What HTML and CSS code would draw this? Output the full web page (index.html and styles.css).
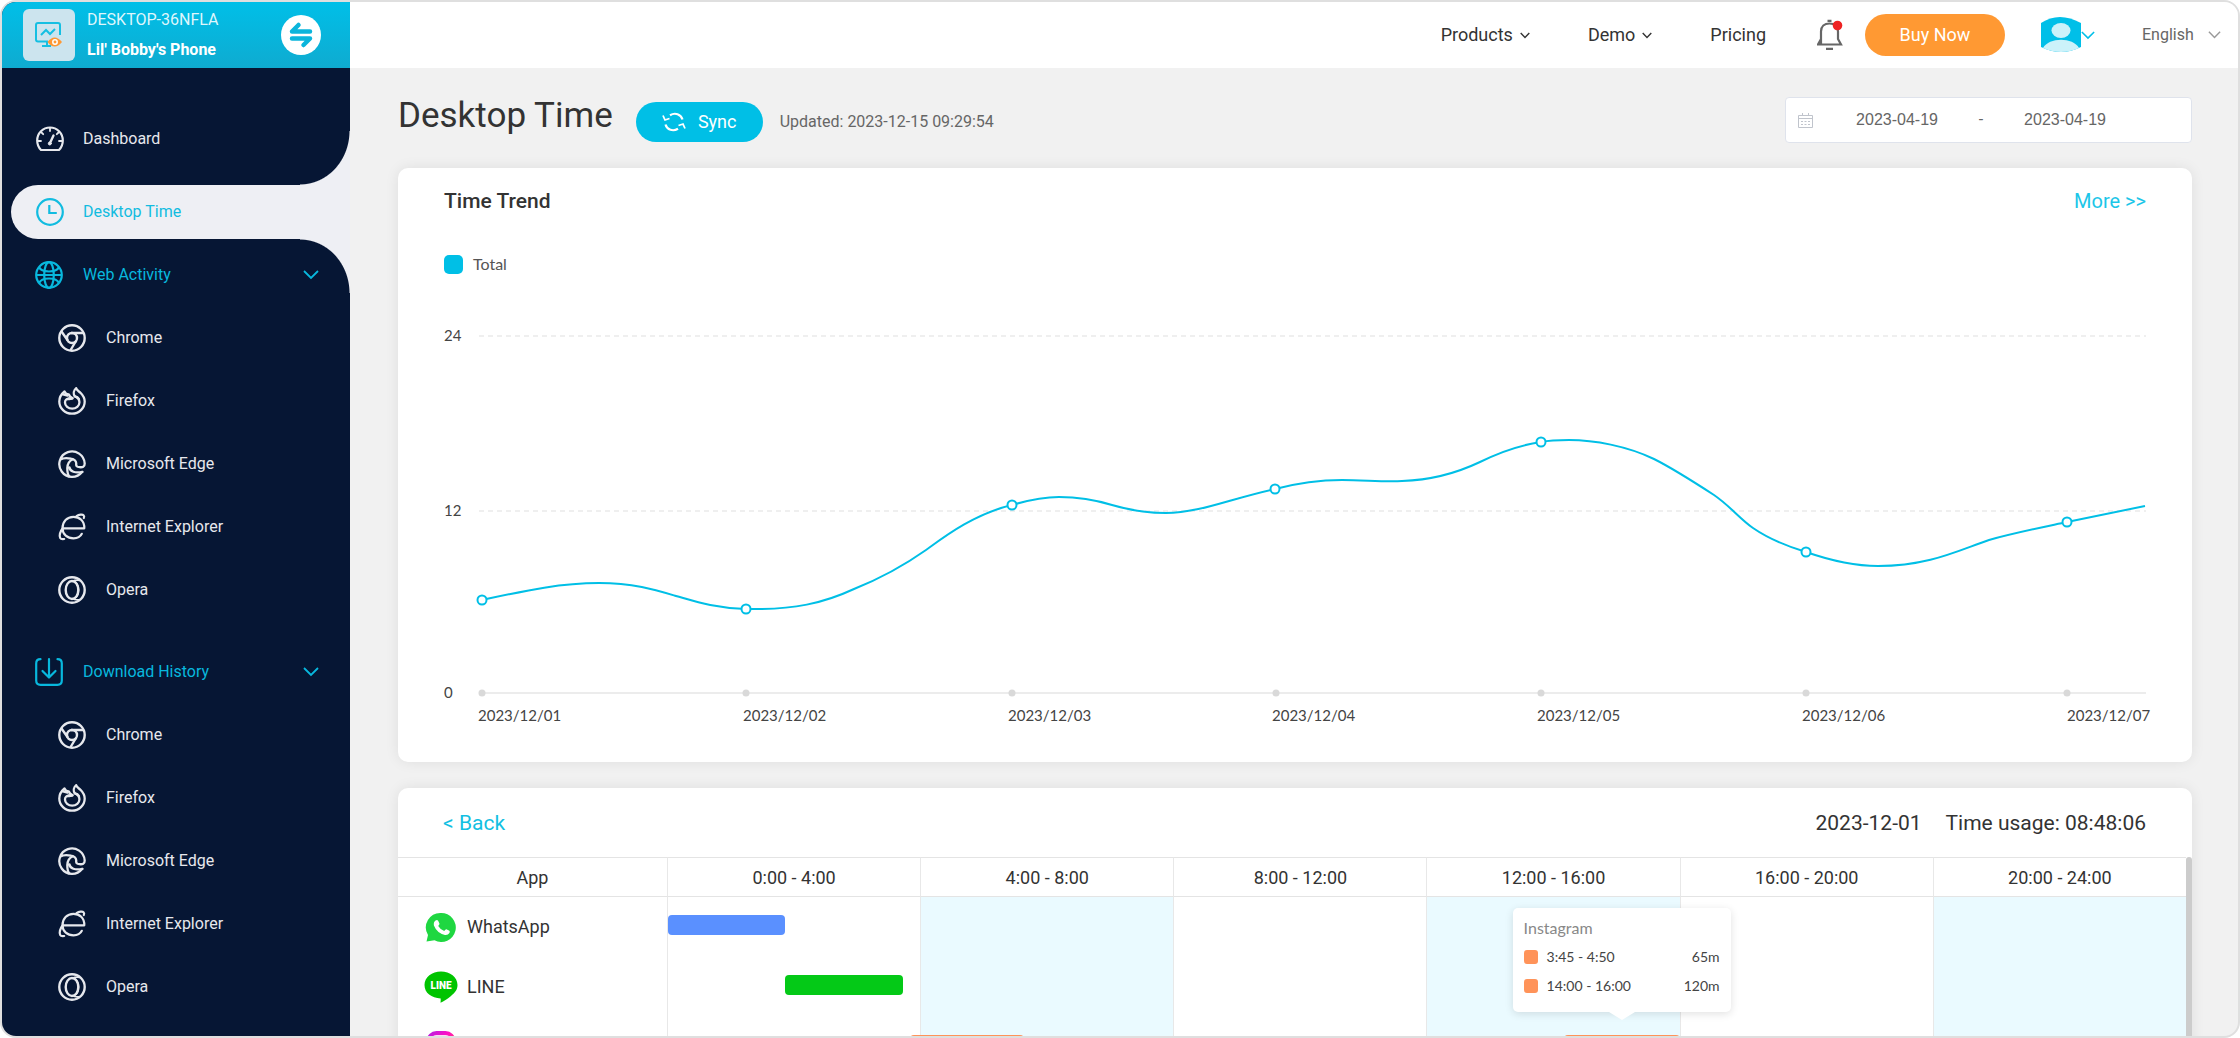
FILE: index.html
```html
<!DOCTYPE html>
<html lang="en">
<head>
<meta charset="utf-8">
<meta name="viewport" content="width=device-width, initial-scale=1">
<title>Desktop Time</title>
<link rel="stylesheet" href="styles.css">
</head>
<body>
<svg class="sprite" aria-hidden="true">
  <symbol id="i-chrome" viewBox="0 0 28 28"><g fill="none" stroke="currentColor" stroke-width="2.4"><circle cx="14" cy="14" r="12.7"/><circle cx="14" cy="14" r="5"/><path d="M13 9h13M9.8 16.500L3.500 7.500M18.300 16.500L12.300 26.500"/></g></symbol>
  <symbol id="i-firefox" viewBox="0 0 28 28"><g fill="none" stroke="currentColor" stroke-width="2.300" stroke-linejoin="round" stroke-linecap="round"><path d="M6.500 4.500C2.800 7.500 1.300 11 1.300 14.500a12.700 12.200 0 0 0 25.400 0C26.700 10 24.500 7.800 22.500 5.800C20.500 4 18.500 3 18.200 1.200C15.800 3 15.200 6.500 16.500 9C19.500 10.500 21.600 12.500 21.400 15.500a7.200 6.200 0 0 1-14.400 0C7 13 8.500 11.800 10.500 12C12 12.200 13.500 12 14.500 11C12 10.300 11.500 9.500 10.800 7.500C9 7.500 7.300 6.500 6.500 4.500z"/><path d="M17 9.500c1.500.2 3 .8 4 2.500M5 7.500l4.500 1.200M10.500 11.500h4"/></g></symbol>
  <symbol id="i-edge" viewBox="0 0 28 28"><g fill="none" stroke="currentColor" stroke-width="2.300" stroke-linecap="round" stroke-linejoin="round"><path d="M24 22A12.700 12.700 0 1 1 26.700 13.500C26.700 17 24.500 17.500 21.500 17.200C18.800 17 18 16 18.200 14C18.500 11.500 16.500 9 13 8.700C9 7.800 5 8 2.500 9.500"/><path d="M14.500 9.500C10.800 11 9.500 14.500 9.300 18C9.300 21.500 9.800 24.500 11 26M11.500 17.500C12 21.500 17 23.500 24.500 21.800"/></g></symbol>
  <symbol id="i-ie" viewBox="0 0 28 28"><g fill="none" stroke="currentColor" stroke-width="2.200" stroke-linecap="round" stroke-linejoin="round"><path d="M4.500 15.300H26.300C26.500 8 21.500 3.800 15.500 3.800C9 3.800 4.500 8.500 4.500 15.300C4.500 21.500 9.500 25.300 15.500 25.300C19.500 25.300 22.500 23.500 23.800 20.800"/><path d="M18.500 3.200C21 1.500 24.500 1.200 25.500 2.200C26.300 3 26.200 4.200 25.800 5M4.500 15.500C2 18.500 1 23 2.200 25C3 26.500 5 26.200 6.200 26"/></g></symbol>
  <symbol id="i-opera" viewBox="0 0 28 28"><g fill="none" stroke="currentColor" stroke-width="2.400"><circle cx="14" cy="14" r="12.700"/><ellipse cx="14" cy="14" rx="6.300" ry="9"/><path d="M14 5.500C17 4 20 4 22 4.500M14 22.500C17 24 20 24 22 23.500M16 5.500C22 8 22 20 16 22.500" stroke-width="1.800"/></g></symbol>
  <symbol id="i-down" viewBox="0 0 16 10"><path d="M1 1l7 7 7-7" fill="none" stroke="currentColor" stroke-width="1.800"/></symbol>
  <symbol id="i-down-sm" viewBox="0 0 10 7"><path d="M.7 1l4.300 4.500L9.300 1" fill="none" stroke="currentColor" stroke-width="1.400"/></symbol>
</svg>

<div class="window">
  <aside class="sidebar">
    <div class="device">
      <span class="device-icon">
        <svg width="28" height="26" viewBox="0 0 28 26" fill="none" stroke="#15bfe2" stroke-width="2" aria-hidden="true"><path d="M13 19.500H3a2 2 0 0 1-2-2V3a2 2 0 0 1 2-2h20a2 2 0 0 1 2 2v10M7 24h9M12 20v4M6 13l5-5 4 4 5-5"/><path d="M12.500 20q7-9 14.500 0q-7.500 9-14.500 0z" fill="#ff9833" stroke="none"/><circle cx="20" cy="20" r="2.200" stroke="#fff" stroke-width="1.500" fill="#ff9833"/></svg>
      </span>
      <div class="device-text">
        <span>DESKTOP-36NFLA</span>
        <strong>Lil' Bobby's Phone</strong>
      </div>
      <button class="switch" type="button" aria-label="Switch device">
        <svg width="24" height="28" viewBox="0 0 24 28" fill="none" stroke="#0bb5dc" stroke-width="4.500" stroke-linecap="round" stroke-linejoin="round" aria-hidden="true"><path d="M21 10.500H3L9.500 4M3 17.500h18L14.500 24"/></svg>
      </button>
    </div>
    <nav class="menu" aria-label="Monitoring">
      <a class="item top" href="#"><svg width="28" height="26" viewBox="0 0 28 26" fill="none" stroke="currentColor" stroke-width="2.200" stroke-linecap="round" aria-hidden="true"><path d="M5 24C2.500 21.500 1.200 18.500 1.200 14.500a12.800 13 0 0 1 25.600 0C26.800 18.500 25.500 21.500 23 24z" stroke-linejoin="round"/><path d="M14 2v3M5.500 6.500l1.700 1.700M22.500 6.500l-1.700 1.700M2 15h3M23 15h3" stroke-width="1.800"/><path d="M17.500 9.500L14 17" stroke-width="2.400"/><circle cx="13.800" cy="17.500" r="1.500" fill="currentColor" stroke-width="1"/></svg>Dashboard</a>
      <a class="item active" href="#" aria-current="page"><svg width="28" height="28" viewBox="0 0 28 28" fill="none" stroke="currentColor" stroke-width="2.200" aria-hidden="true"><circle cx="14" cy="14" r="12.800"/><path d="M13.300 7v8h7.500"/></svg>Desktop Time</a>
      <button class="item group first" type="button"><svg width="28" height="28" viewBox="0 0 28 28" fill="none" stroke="currentColor" stroke-width="2.200" aria-hidden="true"><circle cx="14" cy="14" r="12.800"/><ellipse cx="14" cy="14" rx="4.800" ry="12.800"/><path d="M4 6q2 4.500 10 4.500T24 6M4 22q2-4.500 10-4.500T24 22M1 14h26"/></svg>Web Activity<svg class="chev" width="16" height="10"><use href="#i-down"/></svg></button>
      <ul class="sub">
        <li><a href="#"><svg width="28" height="28"><use href="#i-chrome"/></svg>Chrome</a></li>
        <li><a href="#"><svg width="28" height="28"><use href="#i-firefox"/></svg>Firefox</a></li>
        <li><a href="#"><svg width="28" height="28"><use href="#i-edge"/></svg>Microsoft Edge</a></li>
        <li><a href="#"><svg width="28" height="28"><use href="#i-ie"/></svg>Internet Explorer</a></li>
        <li><a href="#"><svg width="28" height="28"><use href="#i-opera"/></svg>Opera</a></li>
      </ul>
      <button class="item group second" type="button"><svg width="28" height="28" viewBox="0 0 28 28" fill="none" stroke="currentColor" stroke-width="2.200" stroke-linecap="round" stroke-linejoin="round" aria-hidden="true"><path d="M5.500 1.200C2.500 1.200 1.200 2.500 1.200 5.500V22.500C1.200 25.500 2.500 26.800 5.500 26.800H22.500C25.500 26.800 26.800 25.500 26.800 22.500V5.500C26.800 2.500 25.500 1.200 22.500 1.200M14 1.200v18M7.500 13l6.500 6.500L20.500 13"/></svg>Download History<svg class="chev" width="16" height="10"><use href="#i-down"/></svg></button>
      <ul class="sub">
        <li><a href="#"><svg width="28" height="28"><use href="#i-chrome"/></svg>Chrome</a></li>
        <li><a href="#"><svg width="28" height="28"><use href="#i-firefox"/></svg>Firefox</a></li>
        <li><a href="#"><svg width="28" height="28"><use href="#i-edge"/></svg>Microsoft Edge</a></li>
        <li><a href="#"><svg width="28" height="28"><use href="#i-ie"/></svg>Internet Explorer</a></li>
        <li><a href="#"><svg width="28" height="28"><use href="#i-opera"/></svg>Opera</a></li>
      </ul>
    </nav>
  </aside>

  <div class="content">
    <header class="topbar">
      <nav class="links" aria-label="Site">
        <button class="link" type="button">Products<svg width="10" height="7"><use href="#i-down-sm"/></svg></button>
        <button class="link" type="button">Demo<svg width="10" height="7"><use href="#i-down-sm"/></svg></button>
        <a class="link" href="#">Pricing</a>
      </nav>
      <button class="bell" type="button" aria-label="Notifications"><svg width="26" height="32" viewBox="0 0 26 32" fill="none" aria-hidden="true"><path d="M4 25V12.500C4 7.500 7.500 4.500 12.500 4.500S21 7.500 21 12.500V20l3 5.500H1L4 20M10.500 1.800h4M9 29.800h7" stroke="#666" stroke-width="2.200"/><circle cx="20.500" cy="6.500" r="4.800" fill="#ee2222"/></svg></button>
      <button class="buy" type="button">Buy Now</button>
      <button class="user" type="button" aria-label="Account"><svg width="40" height="36" viewBox="0 0 40 36" aria-hidden="true"><path d="M0 6Q18 -6 40 6V30Q20 40 0 30z" fill="#00bfe8"/><ellipse cx="20" cy="13.500" rx="9.500" ry="7.500" fill="#ccf2fa"/><path d="M2 31C8 20 32 20 38 31Q20 39 2 31z" fill="#ccf2fa"/></svg><svg width="14" height="9"><use href="#i-down"/></svg></button>
      <label class="lang"><select aria-label="Language"><option>English</option></select><svg width="13" height="8"><use href="#i-down"/></svg></label>
    </header>

    <main class="main">
      <div class="page-head">
        <div class="title-row">
          <h1>Desktop Time</h1>
          <button class="sync" type="button"><svg width="24" height="20" viewBox="0 0 24 20" fill="none" stroke="#fff" stroke-width="2.200" aria-hidden="true"><path d="M8 3.200C13 .3 19 2 20.500 7.500M16 16.800C11 19.700 5 18 3.500 12.500"/><path d="M1 3.500l2 4.500 4.500-1.500M23 16.500l-2-4.500-4.500 1.500" stroke-width="1.800"/></svg>Sync</button>
          <span class="updated">Updated: 2023-12-15 09:29:54</span>
        </div>
        <div class="range">
          <svg width="15" height="15" viewBox="0 0 15 15" fill="none" stroke="#c0c4cc" aria-hidden="true"><path d="M.5 2.500h14v12H.5zM.5 5.500h14M4.500 0v3M10.500 0v3M3 8.500h2M6.500 8.500h2M10 8.500h2M3 11.500h2M6.500 11.500h2M10 11.500h2"/></svg>
          <input type="text" value="2023-04-19" aria-label="Start date">
          <span>-</span>
          <input type="text" value="2023-04-19" aria-label="End date">
        </div>
      </div>

      <section class="card trend">
        <div class="trend-head"><h2>Time Trend</h2><a href="#">More &gt;&gt;</a></div>
        <div class="legend"><i></i>Total</div>
        <svg class="chart" viewBox="0 0 1702 420" role="img" aria-label="Total hours per day">
          <g class="grid"><path d="M35 26H1702M35 201H1702" stroke-dasharray="5 4"/></g>
          <path class="axis" d="M38 383H1702"/>
          <g class="tick"><circle cx="38" cy="383" r="3.500"/><circle cx="302" cy="383" r="3.500"/><circle cx="568" cy="383" r="3.500"/><circle cx="832" cy="383" r="3.500"/><circle cx="1097" cy="383" r="3.500"/><circle cx="1362" cy="383" r="3.500"/><circle cx="1623" cy="383" r="3.500"/></g>
          <path class="line" d="M38 290C80 281 115 273 155 273C190 273 212 280 232 286C250 291 270 298 302 299C350 300 380 293 410 279C440 267 465 252 482 240C500 227 530 204 568 195C585 190 600 187 615 187C640 187 655 191 668 195C685 200 700 203 722 203C755 203 785 189 831 179C850 174 875 170 898 170C920 170 940 172 958 171C990 170 1015 162 1036 152C1050 145 1070 136 1097 132C1107 130 1115 130 1125 130C1150 130 1183 136 1210 149C1230 159 1250 172 1270 185C1286 196 1295 208 1309 218C1325 229 1342 236 1362 242C1385 250 1410 256 1434 256C1485 256 1515 240 1545 230C1570 223 1595 218 1623 212L1701 196"/>
          <g class="dot"><circle cx="38" cy="290" r="4.500"/><circle cx="302" cy="299" r="4.500"/><circle cx="568" cy="195" r="4.500"/><circle cx="831" cy="179" r="4.500"/><circle cx="1097" cy="132" r="4.500"/><circle cx="1362" cy="242" r="4.500"/><circle cx="1623" cy="212" r="4.500"/></g>
          <g class="label">
            <text x="0" y="31">24</text><text x="0" y="206">12</text><text x="0" y="388">0</text>
            <text x="34" y="411">2023/12/01</text><text x="299" y="411">2023/12/02</text><text x="564" y="411">2023/12/03</text><text x="828" y="411">2023/12/04</text><text x="1093" y="411">2023/12/05</text><text x="1358" y="411">2023/12/06</text><text x="1623" y="411">2023/12/07</text>
          </g>
        </svg>
      </section>

      <section class="card usage">
        <div class="usage-head"><a href="#">&lt; Back</a><div class="usage-info"><span>2023-12-01</span><span>Time usage: 08:48:06</span></div></div>
        <div class="scroller">
          <table>
            <colgroup><col class="c-app"><col><col><col><col><col><col></colgroup>
            <thead><tr><th>App</th><th>0:00 - 4:00</th><th>4:00 - 8:00</th><th>8:00 - 12:00</th><th>12:00 - 16:00</th><th>16:00 - 20:00</th><th>20:00 - 24:00</th></tr></thead>
            <tbody>
              <tr>
                <td><div class="app"><svg width="34" height="32" viewBox="0 0 34 32" aria-hidden="true"><path d="M17 2a14.500 14.500 0 1 1-6.500 27.300L2.500 30.500L4 24A14.500 14.500 0 0 1 17 2z" fill="#1fd741"/><path d="M11.500 9.500l1.500-.5q1 0 1.500 1.500l1 2.200q0 1-1.300 2.200q2.500 4 6 5q1.300-1.700 2.200-1.600l3 1.500q.8.700 0 2.200q-1.500 2.500-4.500 2q-8-2-11-9.500q-.6-3.500 1.600-5z" fill="#fff"/></svg>WhatsApp</div></td>
                <td><div class="bar blue" style="margin-left:0;width:46.500%"></div></td><td></td><td></td><td></td><td></td><td></td>
              </tr>
              <tr>
                <td><div class="app"><svg width="34" height="32" viewBox="0 0 34 32" aria-hidden="true"><path d="M17 .5c9 0 16.500 5.700 16.500 13.500c0 5-3 8-6.500 11c-4 3.500-7 5-10.500 6.700q.3-2.500.2-4.200C7.500 27 .5 22 .5 14C.5 6.200 8 .5 17 .5z" fill="#00c400"/><text x="17" y="18" class="line-logo">LINE</text></svg>LINE</div></td>
                <td><div class="bar green" style="margin-left:46.500%;width:46.500%"></div></td><td></td><td></td><td></td><td></td><td></td>
              </tr>
              <tr>
                <td><div class="app"><svg width="34" height="32" viewBox="0 0 34 32" fill="none" aria-hidden="true"><defs><linearGradient id="ig" x1="0" y1="0" x2="1" y2="1"><stop offset="0" stop-color="#b91fe0"/><stop offset=".4" stop-color="#ff0fc4"/><stop offset="1" stop-color="#ff7a1a"/></linearGradient></defs><rect x="4.500" y="2" width="25" height="26" rx="8" stroke="url(#ig)" stroke-width="4" fill="#fdd9f4"/><circle cx="17" cy="15" r="6" stroke="url(#ig)" stroke-width="3"/></svg>Instagram</div></td>
                <td><div class="bar orange" style="margin-left:96%;width:45%"></div></td><td></td><td></td>
                <td><div class="bar orange" style="margin-left:54%;width:46%">
                  <div class="tip" role="tooltip">
                    <p>Instagram</p>
                    <div><i></i><span>3:45 - 4:50</span><b>65m</b></div>
                    <div><i></i><span>14:00 - 16:00</span><b>120m</b></div>
                  </div>
                </div></td><td></td><td></td>
              </tr>
            </tbody>
          </table>
          <div class="thumb"></div>
        </div>
      </section>
    </main>
  </div>
</div>
</body>
</html>
```
FILE: styles.css
```css
* { box-sizing: border-box; }
body { margin: 0; background: #fff; color: #333; font: 16px/20px Roboto, "Liberation Sans", sans-serif; }
a { color: inherit; text-decoration: none; }
button { border: 0; padding: 0; background: none; color: inherit; font: inherit; cursor: pointer; }
h1, h2, p, ul { margin: 0; padding: 0; }
ul { list-style: none; }
svg { display: block; flex: none; }
.sprite { position: absolute; width: 0; height: 0; }

.window { display: flex; height: 100vh; border: 2px solid #dfdfdf; border-radius: 16px; overflow: hidden; background: #f1f1f1; }

.sidebar { flex: 0 0 348px; background: #061634; color: #e6e8ed; overflow: hidden; }
.device { display: flex; align-items: center; height: 66px; padding: 0 29px 0 21px; background: linear-gradient(#00bfe8, #0fabd0); color: #fff; }
.device-icon { display: grid; place-items: center; width: 52px; height: 52px; border-radius: 6px; background: #cce4ee; }
.device-text { display: flex; flex-direction: column; flex: 1; gap: 10px; margin-left: 12px; }
.device-text span { color: #dff6fc; }
.switch { display: grid; place-items: center; width: 40px; height: 40px; border-radius: 50%; background: #fff; }

.menu { padding-top: 44px; }
.item { position: relative; display: flex; align-items: center; gap: 19px; width: 100%; height: 54px; padding: 0 31px 0 34px; }
.top { margin-bottom: 19px; }
.active { width: auto; margin-left: 9px; padding-left: 25px; border-radius: 27px 0 0 27px; background: #eeeff4; color: #12bce0; }
.active::before, .active::after { content: ""; position: absolute; right: 0; width: 50px; height: 54px; }
.active::before { bottom: 100%; background: radial-gradient(50px 54px at 0 0, transparent 98%, #eeeff4 100%); }
.active::after { top: 100%; background: radial-gradient(50px 54px at 0 100%, transparent 98%, #eeeff4 100%); }
.group { height: 63px; padding-left: 33px; gap: 20px; color: #08b8de; }
.first { margin-top: 4px; }
.second { margin-top: 19px; }
.chev { margin-left: auto; }
.sub a { display: flex; align-items: center; gap: 20px; height: 63px; padding-left: 56px; }

.content { flex: 1; min-width: 0; }
.topbar { display: flex; align-items: center; justify-content: flex-end; height: 66px; padding-right: 17px; background: #fff; font-size: 18px; }
.links { display: flex; align-items: center; gap: 58px; }
.link { display: flex; align-items: center; gap: 7px; }
.bell { margin-left: 51px; }
.buy { width: 140px; height: 42px; margin-left: 22px; border-radius: 21px; background: #ff9933; color: #fff; }
.user { display: flex; align-items: center; margin-left: 36px; color: #00bfe8; }
.lang { display: flex; align-items: center; gap: 14px; margin-left: 47px; color: #999; }
.lang select { appearance: none; border: 0; padding: 0; background: none; color: #666; font: inherit; font-size: 16px; }

.main { padding: 0 46px 0 48px; }
.page-head { display: flex; align-items: center; justify-content: space-between; height: 100px; padding-top: 4px; }
.title-row { display: flex; align-items: center; padding-top: 4px; }
h1 { padding-bottom: 12px; font-size: 35px; line-height: 42px; font-weight: 400; }
.sync { display: flex; align-items: center; justify-content: center; gap: 12px; width: 127px; height: 40px; margin-left: 23px; border-radius: 20px; background: #00bfe6; color: #fff; font-size: 18px; }
.updated { margin-left: 17px; color: #666; }
.range { display: flex; align-items: center; width: 407px; height: 46px; padding-left: 12px; border: 1px solid #dfe3ec; border-radius: 4px; background: #fff; color: #666; }
.range input { width: 168px; border: 0; padding: 0; background: none; color: #666; font: 16px/20px "Liberation Sans", sans-serif; text-align: center; }
.range span { width: 0; display: flex; justify-content: center; }

.card { border-radius: 10px; background: #fff; box-shadow: 0 0 14px rgba(0, 0, 0, .08); }
.trend { padding: 20px 46px 32px; }
.trend-head { display: flex; align-items: center; justify-content: space-between; }
.trend-head a { color: #1cc6e8; font-size: 20px; }
h2 { font-size: 21px; line-height: 26px; font-weight: 500; }
.legend { display: flex; align-items: center; gap: 10px; margin-top: 40px; font: 16px/20px Lato, sans-serif; color: #555; }
.legend i { width: 19px; height: 19px; border-radius: 5px; background: #00bfe6; }
.chart { width: 100%; margin-top: 36px; overflow: visible; }
.grid { stroke: #efefef; stroke-width: 2; }
.axis { stroke: #ececec; stroke-width: 2; }
.tick { fill: #d9d9d9; }
.line { fill: none; stroke: #00bfe6; stroke-width: 2; }
.dot { fill: #fff; stroke: #00bfe6; stroke-width: 2; }
.label { fill: #444; font: 15px Lato, sans-serif; }

.usage { margin-top: 26px; }
.usage-head { display: flex; align-items: center; justify-content: space-between; height: 69px; padding: 0 46px 0 45px; font-size: 21px; }
.usage-head a { color: #12bfe2; }
.usage-info { display: flex; gap: 24px; }
.scroller { display: flex; }
.thumb { flex: 0 0 6px; border-radius: 3px 3px 0 0; background: #ccc; }
table { flex: 1; table-layout: fixed; width: 100%; border-collapse: separate; border-spacing: 0; font-size: 18px; }
.c-app { width: 269px; }
th { height: 40px; padding: 2px 0 0; border-top: 1px solid #e4e4e4; border-bottom: 1px solid #e4e4e4; font-weight: 400; }
th + th, td + td { border-left: 1px solid #e8e8e8; }
td { height: 60px; padding: 0; vertical-align: top; }
td:nth-child(3), td:nth-child(5), td:nth-child(7) { background: #eafaff; }
.app { display: flex; align-items: center; gap: 9px; height: 60px; padding-left: 26px; }
.line-logo { fill: #fff; font: 900 10px Roboto, sans-serif; text-anchor: middle; }
.bar { position: relative; z-index: 1; height: 20px; margin-top: 18px; border-radius: 4px; }
.blue { background: #5a90ff; }
.green { background: #04c917; }
.orange { background: #ff9359; }
.tip { position: absolute; bottom: 43px; left: 50%; width: 218px; height: 104px; margin-left: -109px; padding: 10px 11px; border-radius: 5px; background: #fff; box-shadow: 0 2px 8px rgba(0, 0, 0, .12); color: #444; font: 14px/20px Lato, sans-serif; }
.tip::after { content: ""; position: absolute; top: 100%; left: 50%; margin-left: -13px; border: 13px solid transparent; border-top: 8px solid #fff; border-bottom: 0; }
.tip p { font-size: 16px; color: #888; }
.tip div { display: flex; align-items: center; gap: 9px; margin-top: 9px; }
.tip i { width: 14px; height: 14px; border-radius: 3px; background: #ff9359; }
.tip b { margin-left: auto; font-weight: 400; }
```
